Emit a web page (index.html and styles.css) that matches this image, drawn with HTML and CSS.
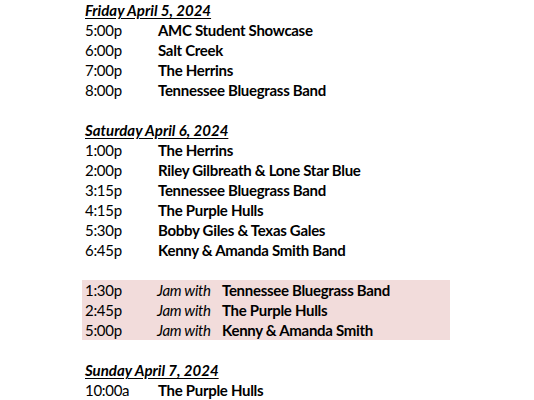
FILE: index.html
```html
<!DOCTYPE html>
<html>
<head>
<meta charset="utf-8">
<link rel="stylesheet" href="styles.css">
</head>
<body>
<div class="schedule">
  <div class="day">Friday April 5, 2024</div>
  <div class="row"><span class="time">5:00p</span><span class="act">AMC Student Showcase</span></div>
  <div class="row"><span class="time">6:00p</span><span class="act">Salt Creek</span></div>
  <div class="row"><span class="time">7:00p</span><span class="act">The Herrins</span></div>
  <div class="row"><span class="time">8:00p</span><span class="act">Tennessee Bluegrass Band</span></div>
  <div class="blank"></div>
  <div class="day">Saturday April 6, 2024</div>
  <div class="row"><span class="time">1:00p</span><span class="act">The Herrins</span></div>
  <div class="row"><span class="time">2:00p</span><span class="act">Riley Gilbreath &amp; Lone Star Blue</span></div>
  <div class="row"><span class="time">3:15p</span><span class="act">Tennessee Bluegrass Band</span></div>
  <div class="row"><span class="time">4:15p</span><span class="act">The Purple Hulls</span></div>
  <div class="row"><span class="time">5:30p</span><span class="act">Bobby Giles &amp; Texas Gales</span></div>
  <div class="row"><span class="time">6:45p</span><span class="act">Kenny &amp; Amanda Smith Band</span></div>
  <div class="blank"></div>
  <div class="jams">
    <div class="jam"><span class="time">1:30p</span><span class="with">Jam with</span><span class="act">Tennessee Bluegrass Band</span></div>
    <div class="jam"><span class="time">2:45p</span><span class="with">Jam with</span><span class="act">The Purple Hulls</span></div>
    <div class="jam"><span class="time">5:00p</span><span class="with">Jam with</span><span class="act">Kenny &amp; Amanda Smith</span></div>
  </div>
  <div class="blank"></div>
  <div class="day">Sunday April 7, 2024</div>
  <div class="row"><span class="time">10:00a</span><span class="act">The Purple Hulls</span></div>
</div>
</body>
</html>
```
FILE: styles.css
```css
html, body {
  margin: 0;
  padding: 0;
  background: #ffffff;
}
body {
  font-family: Lato, "Open Sans", "Liberation Sans", sans-serif;
  font-size: 15px;
  line-height: 20px;
  letter-spacing: -0.3px;
  color: #000000;
}
.schedule {
  display: flex;
  flex-direction: column;
  padding-left: 85px;
}
.day {
  font-weight: bold;
  font-style: italic;
  text-decoration: underline;
  text-underline-offset: 2px;
  letter-spacing: 0;
  height: 20px;
}
.row {
  display: grid;
  grid-template-columns: 73px auto;
  height: 20px;
}
.act {
  font-weight: bold;
}
.blank {
  height: 20px;
}
.jams {
  background: #f2dcdb;
  margin-left: -3px;
  padding-left: 3px;
  width: 365px;
  display: flex;
  flex-direction: column;
}
.jam {
  display: grid;
  grid-template-columns: 72px 65px auto;
  height: 20px;
}
.with {
  font-style: italic;
}
```
